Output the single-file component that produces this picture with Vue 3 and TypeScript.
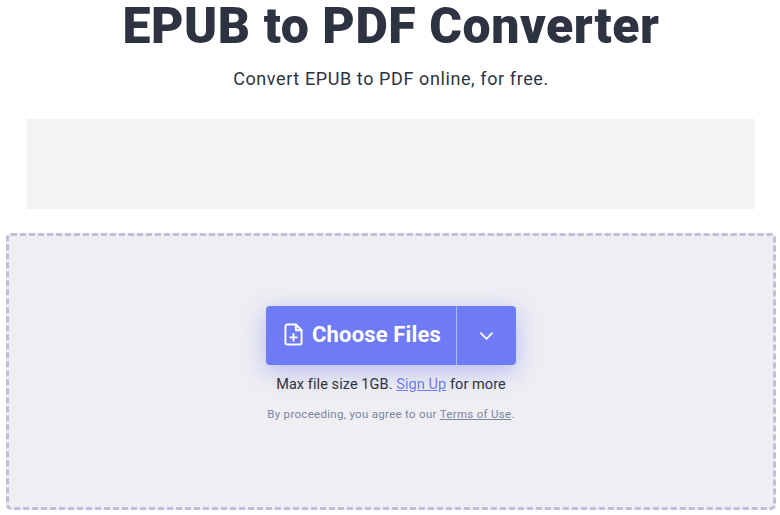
<script setup lang="ts">
const title = "EPUB to PDF Converter";
</script>

<template>
  <main class="page">
    <h1 class="title">{{ title }}</h1>
    <p class="subtitle">Convert EPUB to PDF online, for free.</p>
    <div class="ad"></div>
    <section class="drop">
      <div class="button">
        <div class="choose">
          <svg class="file-icon" viewBox="0 0 20 24" fill="none" stroke="#fff" stroke-width="2" stroke-linecap="round" stroke-linejoin="round">
            <path d="M12.5 1.5H3.5a2 2 0 0 0-2 2v17a2 2 0 0 0 2 2h13a2 2 0 0 0 2-2V7.5z" />
            <path d="M12.5 1.5v6h6" />
            <path d="M10 11.5v7M6.5 15h7" />
          </svg>
          <span>Choose Files</span>
        </div>
        <div class="more">
          <svg class="chevron" viewBox="0 0 16 10" fill="none" stroke="#fff" stroke-width="1.8" stroke-linecap="round" stroke-linejoin="round">
            <path d="M2 2l6 6 6-6" />
          </svg>
        </div>
      </div>
      <p class="limit">Max file size 1GB. <a href="#">Sign Up</a> for more</p>
      <p class="terms">By proceeding, you agree to our <a href="#">Terms of Use</a>.</p>
    </section>
  </main>
</template>

<style>
html, body { margin: 0; background: #fff; overflow: hidden; }
</style>

<style scoped>
.page {
  box-sizing: border-box;
  width: 780px;
  height: 515px;
  padding-left: 2px;
  overflow: hidden;
  display: flex;
  flex-direction: column;
  align-items: center;
  font-family: Roboto, "Liberation Sans", sans-serif;
  color: #2d3340;
}
.title {
  margin: 0;
  height: 56px;
  line-height: 52px;
  font-size: 50px;
  font-weight: 900;
  letter-spacing: 0.55px;
  white-space: nowrap;
}
.subtitle {
  margin: 10px 0 0;
  height: 26px;
  line-height: 26px;
  font-size: 18px;
  letter-spacing: 0.6px;
}
.ad {
  margin-top: 27px;
  width: 728px;
  height: 90px;
  background: #f3f3f4;
  flex: none;
}
.drop {
  margin-top: 24px;
  box-sizing: border-box;
  width: 770px;
  height: 277px;
  flex: none;
  border: 3px dashed #c2bedb;
  border-radius: 5px;
  background: #eeeef3;
  display: flex;
  flex-direction: column;
  align-items: center;
  padding-top: 70px;
}
.button {
  display: flex;
  width: 250px;
  height: 59px;
  border-radius: 4px;
  background: #6f7bf5;
  box-shadow: 0 6px 24px rgba(111, 123, 245, 0.45);
  color: #fff;
}
.choose {
  box-sizing: border-box;
  width: 191px;
  padding-left: 3px;
  padding-bottom: 2px;
  display: flex;
  align-items: center;
  justify-content: center;
  gap: 9px;
  font-size: 22px;
  font-weight: 700;
  letter-spacing: 0.15px;
  border-right: 1px solid #a9b8e6;
}
.file-icon { width: 19px; height: 23px; }
.more {
  flex: 1;
  display: flex;
  align-items: center;
  justify-content: center;
}
.chevron { width: 15px; height: 10px; }
.limit {
  margin: 10px 0 0;
  height: 20px;
  line-height: 20px;
  font-size: 14.5px;
  letter-spacing: 0.08px;
}
.limit a { color: #6f7bf5; }
.terms {
  margin: 11px 0 0;
  line-height: 16px;
  font-size: 11.5px;
  letter-spacing: 0.3px;
  color: #7c85a3;
}
.terms a { color: #7c85a3; }
</style>
